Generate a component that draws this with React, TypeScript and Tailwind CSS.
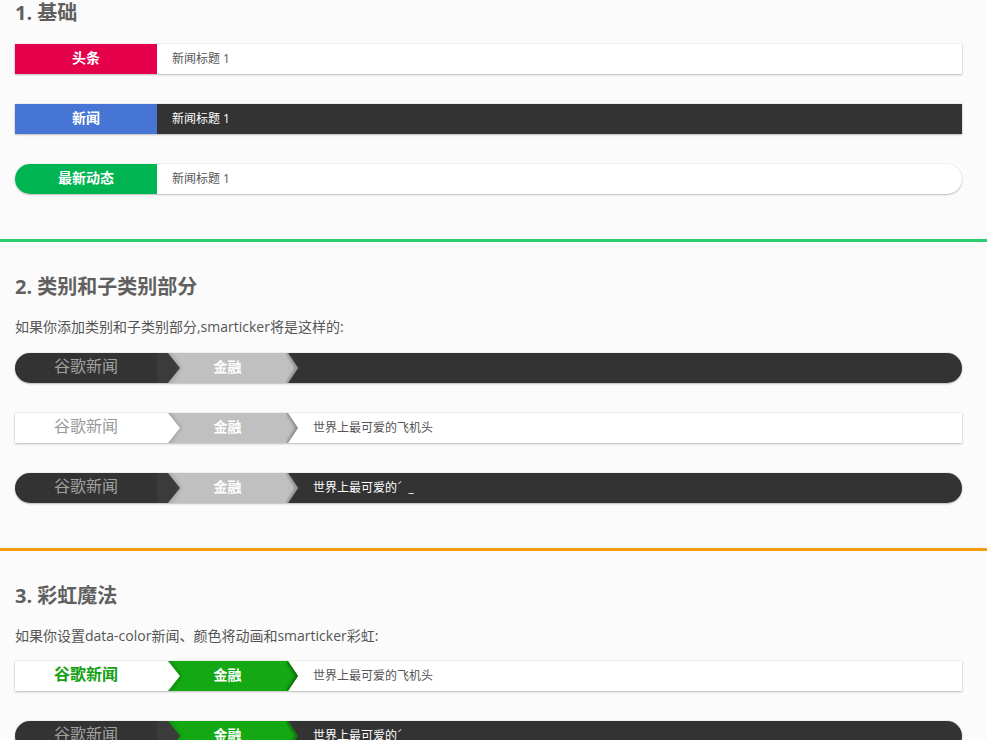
import React, { useId } from "react";

const FONT = "font-['Open_Sans','Noto_Sans_CJK_SC',sans-serif]";

type ChevronProps = {
  fill: string;
  edge: string;
  back?: string;
  label: string;
};

// Sub-category chevron drawn as svg, label centred on top of it
const Chevron: React.FC<ChevronProps> = ({ fill, edge, back, label }) => {
  const id = useId().replace(/:/g, "");
  return (
    <div className="relative h-full w-[141px] shrink-0 flex items-center justify-center">
      <svg
        className="absolute inset-0"
        width="141"
        height="30"
        viewBox="0 0 141 30"
        preserveAspectRatio="none"
      >
        <defs>
          <clipPath id={`c${id}`}>
            <polygon points="11,0 131,0 141,15 131,30 11,30 23,15" />
          </clipPath>
          <filter id={`b${id}`} x="-20%" y="-20%" width="140%" height="140%">
            <feGaussianBlur stdDeviation="1.6" />
          </filter>
        </defs>
        {back && <polygon points="0,0 11,0 23,15 11,30 0,30" fill={back} />}
        <polygon points="11,0 131,0 141,15 131,30 11,30 23,15" fill={fill} />
        <g clipPath={`url(#c${id})`}>
          <polyline
            points="131,-2 141,15 131,32"
            fill="none"
            stroke={edge}
            strokeWidth="5"
            filter={`url(#b${id})`}
          />
          <polyline
            points="11,-2 23,15 11,32"
            fill="none"
            stroke={edge}
            strokeWidth="3"
            opacity="0.5"
            filter={`url(#b${id})`}
          />
        </g>
      </svg>
      <span className="relative -mt-[4px] text-[14px] font-bold text-white">
        {label}
      </span>
    </div>
  );
};

type TickerProps = {
  dark?: boolean;
  rounded?: boolean;
  label: string;
  labelClass: string;
  sub?: { fill: string; edge: string };
  text: React.ReactNode;
  className?: string;
};

const Ticker: React.FC<TickerProps> = ({
  dark,
  rounded,
  label,
  labelClass,
  sub,
  text,
  className = "",
}) => (
  <div
    className={`flex h-[30px] w-[947px] overflow-hidden shadow-[0_1px_2px_rgba(0,0,0,0.22),0_0_0_1px_rgba(0,0,0,0.04)] ${
      dark ? "bg-[#333]" : "bg-white"
    } ${rounded ? "rounded-[15px]" : ""} ${className}`}
  >
    <div
      className={`w-[142px] shrink-0 flex items-center justify-center pb-[4px] ${labelClass}`}
    >
      {label}
    </div>
    {sub && (
      <Chevron
        fill={sub.fill}
        edge={sub.edge}
        back={dark ? "#3b3b3b" : undefined}
        label="金融"
      />
    )}
    <div
      className={`flex items-center pl-[15px] pb-[1px] text-[12px] ${
        dark ? "text-white" : "text-[#555]"
      }`}
    >
      {text}
    </div>
  </div>
);

const Heading: React.FC<{ children: React.ReactNode; className?: string }> = ({
  children,
  className = "",
}) => (
  <h2
    className={`text-[20px] leading-[26px] font-bold text-[#606060] ${className}`}
  >
    {children}
  </h2>
);

const GRAY = { fill: "#c0c0c0", edge: "#8a8a8a" };
const GREEN = { fill: "#15a815", edge: "#0a6a0a" };

const Typing = () => (
  <span>
    世界上最可爱的<span className="align-top text-[9px]">ˊ</span>
    <span className="ml-[6px]">_</span>
  </span>
);

export default function App() {
  return (
    <div className={`min-h-screen bg-[#fbfbfb] overflow-hidden ${FONT}`}>
      {/* 1. basics */}
      <section className="px-[15px]">
        <Heading>1. 基础</Heading>
        <Ticker
          className="mt-[18px]"
          label="头条"
          labelClass="bg-[#e4004b] text-white text-[14px] font-bold"
          text="新闻标题 1"
        />
        <Ticker
          className="mt-[30px]"
          dark
          label="新闻"
          labelClass="bg-[#4775d5] text-white text-[14px] font-bold"
          text="新闻标题 1"
        />
        <Ticker
          className="mt-[30px]"
          rounded
          label="最新动态"
          labelClass="bg-[#00b451] text-white text-[14px] font-bold"
          text="新闻标题 1"
        />
      </section>

      <div className="mt-[45px] h-[3px] bg-[#2ecc71]" />

      {/* 2. categories */}
      <section className="px-[15px]">
        <Heading className="mt-[32px]">2. 类别和子类别部分</Heading>
        <p className="mt-[17px] text-[14px] leading-[20px] text-[#555]">
          如果你添加类别和子类别部分,smarticker将是这样的:
        </p>
        <Ticker
          className="mt-[16px]"
          dark
          rounded
          label="谷歌新闻"
          labelClass="text-[16px] text-[#a0a0a0]"
          sub={GRAY}
          text=""
        />
        <Ticker
          className="mt-[30px]"
          label="谷歌新闻"
          labelClass="text-[16px] text-[#999]"
          sub={GRAY}
          text="世界上最可爱的飞机头"
        />
        <Ticker
          className="mt-[30px]"
          dark
          rounded
          label="谷歌新闻"
          labelClass="text-[16px] text-[#a0a0a0]"
          sub={GRAY}
          text={<Typing />}
        />
      </section>

      <div className="mt-[45px] h-[3px] bg-[#f39c12]" />

      {/* 3. rainbow */}
      <section className="px-[15px] pb-[40px]">
        <Heading className="mt-[32px]">3. 彩虹魔法</Heading>
        <p className="mt-[17px] text-[14px] leading-[20px] text-[#555]">
          如果你设置data-color新闻、颜色将动画和smarticker彩虹:
        </p>
        <Ticker
          className="mt-[15px]"
          label="谷歌新闻"
          labelClass="text-[16px] font-bold text-[#15a015]"
          sub={GREEN}
          text="世界上最可爱的飞机头"
        />
        <Ticker
          className="mt-[30px]"
          dark
          rounded
          label="谷歌新闻"
          labelClass="text-[16px] text-[#a0a0a0]"
          sub={GREEN}
          text={
            <span>
              世界上最可爱的<span className="align-top text-[9px]">ˊ</span>
            </span>
          }
        />
      </section>
    </div>
  );
}
